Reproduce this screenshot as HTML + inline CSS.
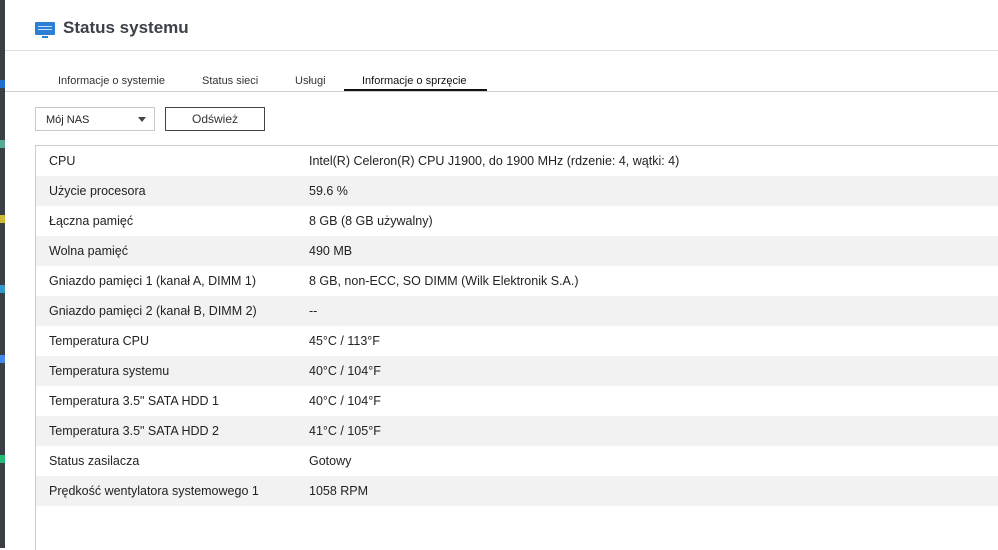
<!DOCTYPE html>
<html><head><meta charset="utf-8"><style>
*{margin:0;padding:0;box-sizing:border-box}
body{width:998px;height:548px;overflow:hidden;background:#fff;font-family:"Liberation Sans",Arial,sans-serif;position:relative;color:#222}
.strip{position:absolute;left:0;top:0;width:5px;height:548px;background:#3a3f45}
.strip i{position:absolute;left:0;width:5px;height:8px}
.title{position:absolute;left:63px;top:18px;font-size:17px;font-weight:bold;color:#3c4048}
.ico{position:absolute;left:35px;top:22px;width:20px;height:13px;background:#2d7fd3;border-radius:1px}
.ico:after{content:"";position:absolute;left:7px;top:14px;width:6px;height:2px;background:#2d7fd3}
.ico b{position:absolute;left:3px;height:1px;width:14px;background:#bfe0ff}
.hl{position:absolute;left:5px;right:0;top:50px;height:1px;background:#ddd}
.tabs{position:absolute;left:5px;right:0;top:91px;height:1px;background:#ccc}
.tab{position:absolute;top:75px;font-size:11px;color:#333}
.ul{position:absolute;left:344px;width:143px;top:89px;height:2px;background:#111}
.sel{position:absolute;left:35px;top:107px;width:120px;height:24px;border:1px solid #c8c8c8;font-size:11px;padding:6px 0 0 10px}
.sel:after{content:"";position:absolute;right:8px;top:9px;border:4px solid transparent;border-top:5px solid #444}
.btn{position:absolute;left:165px;top:107px;width:100px;height:24px;border:1px solid #444;font-size:12px;text-align:center;line-height:22px;color:#333}
.tbl{position:absolute;left:35px;top:145px;right:0;bottom:-2px;border-left:1px solid #ccc;border-top:1px solid #ccc}
.r{height:30px;line-height:30px;font-size:12.5px;position:relative;color:#222}
.r:nth-child(even){background:#f2f2f2}
.r span{position:absolute;left:13px}
.r em{font-style:normal;position:absolute;left:273px}
</style></head><body>
<div class="strip"><i style="top:80px;background:#1e6fd0"></i><i style="top:140px;background:#5a9"></i><i style="top:215px;background:#cb3"></i><i style="top:285px;background:#39c"></i><i style="top:355px;background:#48e"></i><i style="top:455px;background:#2b7"></i></div>
<div class="ico"><b style="top:4px"></b><b style="top:7px"></b></div>
<div class="title">Status systemu</div>
<div class="hl"></div>
<div class="tab" style="left:58px">Informacje o systemie</div>
<div class="tab" style="left:202px">Status sieci</div>
<div class="tab" style="left:295px">Usługi</div>
<div class="tab" style="left:362px;color:#111">Informacje o sprzęcie</div>
<div class="tabs"></div><div class="ul"></div>
<div class="sel">Mój NAS</div>
<div class="btn">Odśwież</div>
<div class="tbl">
<div class="r"><span>CPU</span><em>Intel(R) Celeron(R) CPU J1900, do 1900 MHz (rdzenie: 4, wątki: 4)</em></div>
<div class="r"><span>Użycie procesora</span><em>59.6 %</em></div>
<div class="r"><span>Łączna pamięć</span><em>8 GB (8 GB używalny)</em></div>
<div class="r"><span>Wolna pamięć</span><em>490 MB</em></div>
<div class="r"><span>Gniazdo pamięci 1 (kanał A, DIMM 1)</span><em>8 GB, non-ECC, SO DIMM (Wilk Elektronik S.A.)</em></div>
<div class="r"><span>Gniazdo pamięci 2 (kanał B, DIMM 2)</span><em>--</em></div>
<div class="r"><span>Temperatura CPU</span><em>45°C / 113°F</em></div>
<div class="r"><span>Temperatura systemu</span><em>40°C / 104°F</em></div>
<div class="r"><span>Temperatura 3.5" SATA HDD 1</span><em>40°C / 104°F</em></div>
<div class="r"><span>Temperatura 3.5" SATA HDD 2</span><em>41°C / 105°F</em></div>
<div class="r"><span>Status zasilacza</span><em>Gotowy</em></div>
<div class="r"><span>Prędkość wentylatora systemowego 1</span><em>1058 RPM</em></div>
</div>
</body></html>
